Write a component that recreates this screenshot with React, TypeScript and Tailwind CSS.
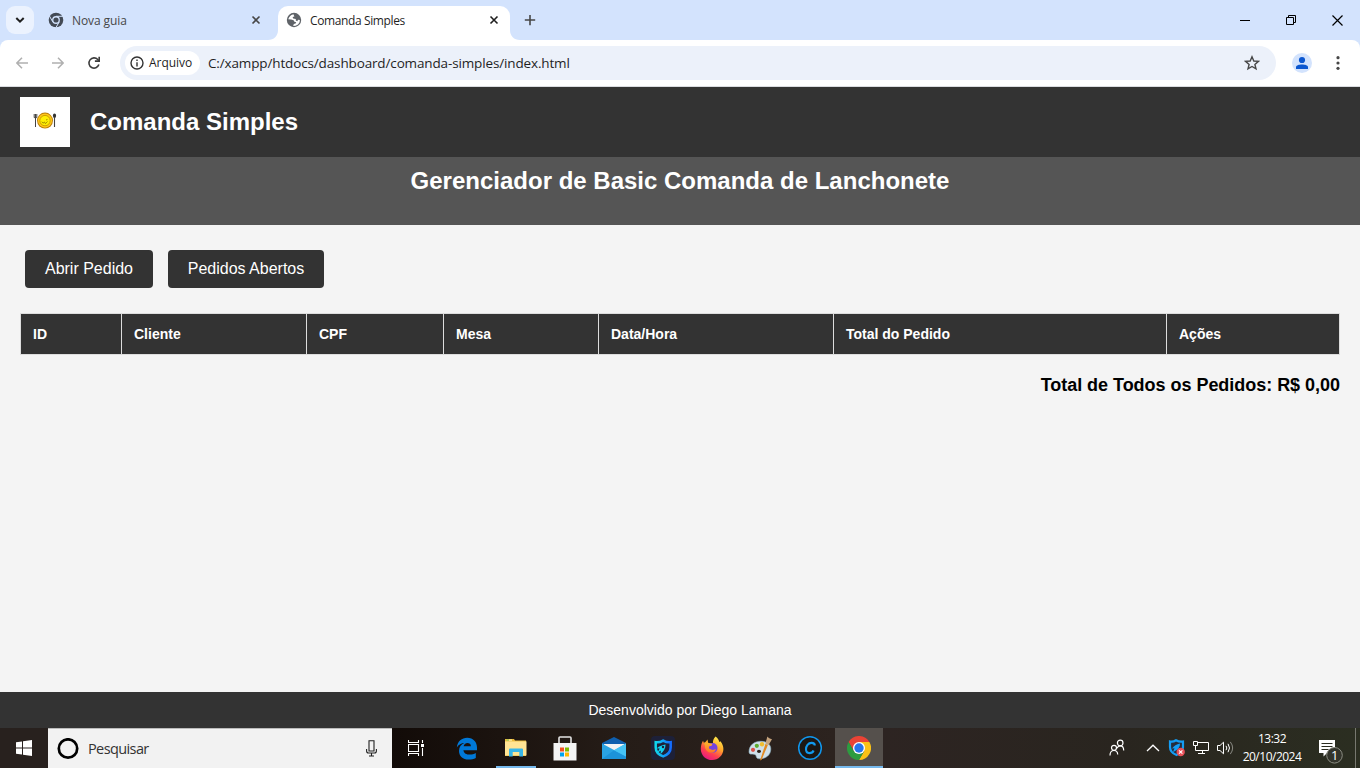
import React from "react";

const ui = "font-['Open_Sans','Noto_Sans',sans-serif]";

function ChromeMono() {
  return (
    <svg width="16" height="16" viewBox="0 0 16 16" className="shrink-0">
      <circle cx="8" cy="8" r="7.3" fill="#434a55" />
      <path d="M8 4.3H15M4.8 9.9L1.3 3.8M11.2 9.9L7.7 16" stroke="#d3e3fd" strokeWidth="1" fill="none" />
      <circle cx="8" cy="8" r="3.9" fill="#d3e3fd" />
      <circle cx="8" cy="8" r="2.6" fill="#434a55" />
    </svg>
  );
}

function Globe() {
  return (
    <svg width="16" height="16" viewBox="0 0 16 16" className="shrink-0">
      <circle cx="8" cy="8" r="7.2" fill="#5f6368" />
      <path d="M7.4 2.2L5 3.2L3.2 5.2L2.2 7.2L5.2 7.4L7.6 8.2L8.4 9.8L10.2 10.2L9.6 11.6L7.8 12L7.2 14L9.6 13.8L12 12.4L13.6 10.2L13.9 8L12 7.8L11.4 9.2L9.8 8.4L9.8 7L7.2 6.4L6.6 5L8.4 4.4Z" fill="#fff" />
    </svg>
  );
}

function Cross({ color = "#333" }: { color?: string }) {
  return (
    <svg width="10" height="10" viewBox="0 0 10 10" className="shrink-0">
      <path d="M1.5 1.5L8.5 8.5M8.5 1.5L1.5 8.5" stroke={color} strokeWidth="1.6" />
    </svg>
  );
}

function TabStrip() {
  return (
    <div className="flex h-10 items-start bg-[#d3e3fd]">
      <div className="ml-1.5 mt-1.5 flex h-7 w-7 items-center justify-center rounded-[9px] bg-[#ebf2fe]">
        <svg width="10" height="8" viewBox="0 0 10 8">
          <path d="M1.3 2L5 5.7L8.7 2" fill="none" stroke="#1f1f1f" strokeWidth="2" />
        </svg>
      </div>
      <div className="ml-3.5 flex h-10 w-[220px] items-center">
        <ChromeMono />
        <span className="ml-2 w-[179px] pt-0.5 text-[12px] leading-4 tracking-[-0.1px] text-[#474747]">Nova guia</span>
        <Cross color="#474747" />
      </div>
      <svg width="10" height="40" viewBox="0 0 10 40" className="shrink-0">
        <path d="M0 40C6 40 10 36 10 30V40Z" fill="#fff" />
      </svg>
      <div className="mt-1.5 flex h-[34px] w-[232px] items-start rounded-t-[10px] bg-white pl-2 pt-1.5">
        <Globe />
        <span className="ml-2 w-[179px] pt-px text-[12px] leading-4 tracking-[-0.38px] text-[#1f1f1f]">Comanda Simples</span>
        <span className="pt-[3px]"><Cross color="#1f1f1f" /></span>
      </div>
      <svg width="10" height="40" viewBox="0 0 10 40" className="shrink-0">
        <path d="M10 40C4 40 0 36 0 30V40Z" fill="#fff" />
      </svg>
      <svg width="12" height="40" viewBox="0 0 12 40" className="ml-1">
        <path d="M6 15V25.2M.8 20H11.2" stroke="#474747" strokeWidth="1.6" />
      </svg>
      <div className="ml-auto flex h-10 items-center pr-[17px]">
        <svg width="10" height="11" viewBox="0 0 10 11"><path d="M0 5.5H10" stroke="#000" strokeWidth="1" /></svg>
        <svg width="11" height="11" viewBox="0 0 11 11" className="ml-9"><path d="M.5 2.5H7.5V9.5H.5ZM2.5 2.5V.5H9.5V7.5H7.5" fill="none" stroke="#000" /></svg>
        <svg width="11" height="11" viewBox="0 0 11 11" className="ml-[35px]"><path d="M.5 .5L10.5 10.5M10.5 .5L.5 10.5" stroke="#000" strokeWidth="1.2" /></svg>
      </div>
    </div>
  );
}

function Toolbar() {
  return (
    <div className="bg-[#d3e3fd]">
      <div className="flex h-[47px] items-start rounded-t-[8px] border-b border-[#dadce0] bg-white pt-1.5">
        <div className="flex h-[34px] w-[120px] items-center pl-4">
          <svg width="12" height="12" viewBox="0 0 12 12"><path d="M12 6H1.2M6 .8L.9 6L6 11.2" fill="none" stroke="#b0b0b0" strokeWidth="1.5" /></svg>
          <svg width="12" height="12" viewBox="0 0 12 12" className="ml-6"><path d="M0 6H10.8M6 .8L11.1 6L6 11.2" fill="none" stroke="#b0b0b0" strokeWidth="1.5" /></svg>
          <svg width="14" height="14" viewBox="0 0 14 14" className="ml-[23px]">
            <path d="M11.9 8.6A5.1 5.1 0 1 1 10.8 3.5L12 4.7" fill="none" stroke="#3c3c3c" strokeWidth="1.6" />
            <path d="M13 .8V5.9H7.9V4.3H11.4V.8Z" fill="#3c3c3c" />
          </svg>
        </div>
        <div className="flex h-[34px] w-[1156px] items-center rounded-full bg-[#ecf1fa] pl-[5px]">
          <div className="flex h-6 w-[75px] items-center rounded-full bg-white pl-[5px]">
            <svg width="14" height="14" viewBox="0 0 14 14" className="shrink-0">
              <circle cx="7" cy="7" r="6" fill="none" stroke="#333" strokeWidth="1.4" />
              <path d="M7 6.2V10.4M7 3.6V5" stroke="#333" strokeWidth="1.4" />
            </svg>
            <span className="ml-[5px] text-[12px] font-medium leading-4 tracking-[-0.05px] text-[#1f1f1f]">Arquivo</span>
          </div>
          <span className="ml-2 text-[13.5px] leading-5 tracking-[-0.14px] text-[#1f1f1f]">C:/xampp/htdocs/dashboard/comanda-simples/index.html</span>
          <svg width="16" height="16" viewBox="0 0 16 16" className="ml-auto mr-4">
            <path d="M8 1.8L9.8 6L14.4 6.4L10.9 9.4L12 13.9L8 11.5L4 13.9L5.1 9.4L1.6 6.4L6.2 6Z" fill="none" stroke="#474747" strokeWidth="1.4" />
          </svg>
        </div>
        <div className="ml-4 flex h-[34px] items-center">
          <svg width="20" height="20" viewBox="0 0 20 20">
            <circle cx="10" cy="10" r="10" fill="#d3e3fd" />
            <circle cx="10" cy="7" r="3.1" fill="#0b57d0" />
            <path d="M4 16V14C4 10.6 16 10.6 16 14V16Z" fill="#0b57d0" />
          </svg>
          <svg width="4" height="16" viewBox="0 0 4 16" className="ml-6" fill="#474747">
            <circle cx="2" cy="2.7" r="1.6" /><circle cx="2" cy="8" r="1.6" /><circle cx="2" cy="13.3" r="1.6" />
          </svg>
        </div>
      </div>
    </div>
  );
}

function Logo() {
  return (
    <div className="flex h-[50px] w-[50px] items-center justify-center bg-white pb-0.5">
      <svg width="24" height="18" viewBox="0 0 24 18">
        <circle cx="12" cy="8.6" r="8" fill="#b97c08" />
        <circle cx="12" cy="8.6" r="7.1" fill="#ffc61a" />
        <circle cx="12" cy="8.6" r="5.2" fill="#ffee05" stroke="#c79a00" strokeWidth=".9" />
        <path d="M8.8 9.7L10 11.2L11.5 10L12.4 11.7L14.6 9.5M13 8L14.5 7.4" fill="none" stroke="#8e7c00" strokeWidth=".8" />
        <path d="M1.2 2V5.6H3.8V2M2.5 2V15" fill="none" stroke="#444" strokeWidth="1" />
        <ellipse cx="21.5" cy="3.8" rx="1.6" ry="2.2" fill="#333" />
        <path d="M21.5 5V15" stroke="#444" strokeWidth="1.1" />
      </svg>
    </div>
  );
}

const columns = ["ID", "Cliente", "CPF", "Mesa", "Data/Hora", "Total do Pedido", "Ações"];

function Page() {
  return (
    <div className="flex h-[641px] flex-col bg-[#f4f4f4] font-['Liberation_Sans',Arial,sans-serif]">
      <header className="flex h-[70px] items-center bg-[#333] px-5">
        <Logo />
        <h1 className="ml-5 text-2xl font-bold leading-7 text-white">Comanda Simples</h1>
      </header>
      <div className="h-[68px] bg-[#555] pt-2.5 text-center">
        <h2 className="text-2xl font-bold leading-7 text-white">Gerenciador de Basic Comanda de Lanchonete</h2>
      </div>
      <main className="flex-1 px-5 pt-[25px]">
        <div className="flex gap-[15px] pl-[5px]">
          <button className="h-[38px] w-32 rounded-[4px] bg-[#333] text-base leading-[18px] text-white">Abrir Pedido</button>
          <button className="h-[38px] w-[156px] rounded-[4px] bg-[#333] text-base leading-[18px] text-white">Pedidos Abertos</button>
        </div>
        <div className="mt-[25px] grid h-[42px] grid-cols-[101px_185px_137px_155px_235px_333px_174px] border-y border-r border-[#ddd] bg-[#333]">
          {columns.map((c) => (
            <div key={c} className="flex items-center border-l border-[#ddd] pl-3 text-sm font-bold text-white">{c}</div>
          ))}
        </div>
        <p className="mt-5 text-right text-lg font-bold leading-5 tracking-[-0.03px] text-black">Total de Todos os Pedidos: R$ 0,00</p>
      </main>
      <footer className="h-9 bg-[#333] pl-5 pt-2.5 text-center text-sm leading-4 text-white">Desenvolvido por Diego Lamana</footer>
    </div>
  );
}

function TaskView() {
  return (
    <svg width="18" height="16" viewBox="0 0 18 16" fill="none" stroke="#fff">
      <path d="M.5 0V2.5H10.5V0M.5 16V13.5H10.5V16M.5 4.5H10.5V11.5H.5ZM14.5 0V3M14.5 8V16" strokeWidth="1.1" />
      <path d="M13 4H16V7H13Z" fill="#fff" stroke="none" />
    </svg>
  );
}

function Edge() {
  return (
    <svg width="22" height="23" viewBox="0 0 22 23">
      <path d="M.8 10.4C1.6 4.2 5.8 .8 11.2 .8C17.4 .8 21 5.2 21 10.6V13.2H7.4C7.8 16.4 10.6 17.6 13.8 17.6C16 17.6 18 17 19.8 16V20.9C17.8 22 15.4 22.6 12.6 22.6C7 22.6 3 18.8 3 13.9C3 10.3 5 7.4 8.4 6.1C5.3 6.2 2.6 7.6 .8 10.4ZM7.6 9.2H14.9C14.9 6.9 13.4 5.9 11.4 5.9C9.4 5.9 8 7.2 7.6 9.2Z" fill="#0078d7" />
    </svg>
  );
}

function Folder() {
  return (
    <svg width="22" height="20" viewBox="0 0 22 20">
      <path d="M0 1H9L10 2.4H21V18H0Z" fill="#eab837" />
      <path d="M1.5 1.5H4V2.7H1.5Z" fill="#8fd16a" />
      <path d="M4 1.5H7V2.7H4Z" fill="#fff3b0" />
      <path d="M0 3.4H21.5V17.5H0Z" fill="#ffe494" />
      <path d="M4 11.5Q4 10.5 5 10.5H17Q18 10.5 18 11.5V18.6H14.3V14H7.7V18.6H4Z" fill="#38b6e8" />
    </svg>
  );
}

function Store() {
  return (
    <svg width="24" height="25" viewBox="0 0 24 25">
      <path d="M6 9V2Q6 1 7 1H17Q18 1 18 2V9" fill="none" stroke="#e4e4e4" strokeWidth="1.6" />
      <path d="M.5 7H23.5V24.5H.5Z" fill="#f4f4f4" />
      <path d="M7 11.5H11V15.5H7Z" fill="#f25022" />
      <path d="M12 11.5H16V15.5H12Z" fill="#7fba00" />
      <path d="M7 16.5H11V20.5H7Z" fill="#00a4ef" />
      <path d="M12 16.5H16V20.5H12Z" fill="#ffb900" />
    </svg>
  );
}

function Mail() {
  return (
    <svg width="24" height="24" viewBox="0 0 24 24">
      <path d="M0 7L12 1L24 7V11H0Z" fill="#0f5fae" />
      <path d="M2 8H22V17H2Z" fill="#f3f3f3" />
      <path d="M24 7.5L12 14.2L0 23H24Z" fill="#35b8f1" />
      <path d="M0 7.5L24 20.6V23H0Z" fill="#29a3e4" />
      <path d="M12 14.2L24 20.6V23H0Z" fill="#1c93da" />
      <path d="M24 7.5L12 14.2L24 20.6Z" fill="#45c3f5" />
    </svg>
  );
}

function Shield() {
  return (
    <svg width="24" height="24" viewBox="0 0 24 24">
      <defs>
        <linearGradient id="shieldBlue"><stop stopColor="#10d8ed" /><stop offset="1" stopColor="#136cff" /></linearGradient>
      </defs>
      <rect width="24" height="24" rx="4" fill="#1d2038" />
      <path d="M4.7 6.2Q8.4 6.8 12.2 4.6Q16 6.8 19.7 6.2V11.2C19.7 15.8 16.6 18.8 12.2 20.4C7.8 18.8 4.7 15.8 4.7 11.2Z" fill="none" stroke="url(#shieldBlue)" strokeWidth="2.5" />
      <path d="M14.5 8.5C11.5 8.8 8.5 10 5.8 12.2L8.7 12.6L6.2 17L9.8 14.4L9.6 18C12.6 15.8 14.7 12.2 14.5 8.5Z" fill="#12cfee" />
      <circle cx="12" cy="11" r="1.2" fill="#1d2038" />
    </svg>
  );
}

function Firefox() {
  return (
    <svg width="24" height="25" viewBox="0 0 24 25">
      <defs>
        <linearGradient id="ffBody" x1=".8" y1="0" x2=".25" y2="1"><stop stopColor="#fff44f" /><stop offset=".4" stopColor="#ffa62a" /><stop offset=".7" stopColor="#ff4050" /><stop offset="1" stopColor="#e31587" /></linearGradient>
        <linearGradient id="ffArm" x2="0" y2="1"><stop stopColor="#ffb52e" /><stop offset="1" stopColor="#ff7128" /></linearGradient>
      </defs>
      <path d="M15.6 .5C18.3 2.6 19 4.6 19.2 6L20.4 5.2C22.3 7.5 23.4 10.4 23.4 13C23.4 19.2 18.3 24 12.2 24C5.7 24 .8 19.1 .8 12.9C.8 9.9 1.6 7.1 3 4.8L4.2 7.4L7.5 3.5L8.2 7L13 7.4C12.6 5.1 13.6 2.4 15.6 .5Z" fill="url(#ffBody)" />
      <circle cx="12.6" cy="12" r="4.9" fill="#7544de" />
      <path d="M4 6.6L7.8 6.4L9.5 7.6L12.5 7.7L11.6 9.8L8.9 10.6L9.2 12.8L12.5 14.1L16 13.2C15 16.2 12.3 17.4 9.8 16.6C6.6 15.6 4.6 12.5 5 9.7Z" fill="url(#ffArm)" />
    </svg>
  );
}

function Paint() {
  return (
    <svg width="25" height="25" viewBox="0 0 25 25">
      <path d="M1 15.8C1 9.2 6.4 5.3 12.6 5.3C18.8 5.3 22.8 8.4 22.8 13C22.8 19 17.8 23 11.2 22.8C7.6 22.7 8.8 20 7.3 18.8C5.4 17.4 1 19.7 1 15.8Z" fill="#cfe0ea" stroke="#8caebf" strokeWidth=".6" />
      <ellipse cx="11" cy="15.3" rx="2" ry="1.6" fill="#2b211b" />
      <circle cx="5" cy="13.8" r="2.1" fill="#d95248" />
      <circle cx="8.8" cy="9.8" r="2.1" fill="#5dad2f" />
      <circle cx="14" cy="8.3" r="2.2" fill="#f0bd30" />
      <path d="M12 24.5L17.4 8L20 8.8L13.6 23.8Z" fill="#e28a22" />
      <path d="M17.4 7.6L20.6 9L24 3.2C21.8 3 20.6 2 19.4 .6Z" fill="#c5a37d" />
    </svg>
  );
}

function CCircle() {
  return (
    <svg width="26" height="26" viewBox="0 0 26 26">
      <circle cx="13" cy="13" r="11.3" fill="#1b1714" stroke="#1196ec" strokeWidth="1.5" />
      <path d="M17.8 10.5C17.8 8.7 16.5 7.9 14.6 7.9C11.1 7.9 9 11 9 14.3C9 16.8 10.2 18.1 12.3 18.1C14.4 18.1 15.9 17.3 16.6 15.5" fill="none" stroke="#1199ee" strokeWidth="2.1" />
    </svg>
  );
}

function Chrome() {
  return (
    <svg width="24" height="24" viewBox="0 0 24 24">
      <path d="M1.6 6A12 12 0 0 1 22.4 6H12L6.8 15Z" fill="#ea4335" />
      <path d="M12 6H22.4A12 12 0 0 1 12 24L17.2 15Z" fill="#fbc116" />
      <path d="M1.6 6L6.8 15L12 18L17.2 15L12 24A12 12 0 0 1 1.6 6Z" fill="#2d9b40" />
      <circle cx="12" cy="12" r="6" fill="#fff" />
      <circle cx="12" cy="12" r="4.7" fill="#2874ec" />
    </svg>
  );
}

const pinned = [
  { key: "edge", icon: <Edge /> },
  { key: "folder", icon: <Folder /> },
  { key: "store", icon: <Store /> },
  { key: "mail", icon: <Mail /> },
  { key: "shield", icon: <Shield /> },
  { key: "firefox", icon: <Firefox /> },
  { key: "paint", icon: <Paint /> },
  { key: "c", icon: <CCircle /> },
];

function Taskbar() {
  return (
    <div className="flex h-10 bg-[#28211e]">
      <div className="flex w-12 items-center justify-center bg-[#28211e]">
        <svg width="16" height="16" viewBox="0 0 16 16" fill="#fff"><path d="M0 2.3L6 1.4V7.5H0ZM7 1.3L16 0V7.5H7ZM0 8.5H6V14.6L0 13.7ZM7 8.5H16V16L7 14.7Z" /></svg>
      </div>
      <div className="flex w-[344px] items-center border-t border-[#bcbcbc] bg-[#f2f2f2] pl-[9px] pr-3.5">
        <svg width="22" height="22" viewBox="0 0 22 22"><circle cx="11" cy="10.5" r="9.2" fill="none" stroke="#000" strokeWidth="2.7" /></svg>
        <span className="ml-[9px] text-[14.5px] leading-5 tracking-[-0.6px] text-[#333]">Pesquisar</span>
        <svg width="12" height="18" viewBox="0 0 12 18" className="ml-auto" fill="none" stroke="#222" strokeWidth="1.1">
          <path d="M3 .8H8V11H3ZM.6 9V11Q.6 13 2.6 13H8.4Q10.4 13 10.4 11V9M5.5 13V16M3 16H8" />
        </svg>
      </div>
      <div className="flex w-[443px] bg-linear-to-r from-[#120b08] via-[#251c17] to-[#2c231f]">
        <div className="flex w-[50px] items-center justify-center"><TaskView /></div>
        {pinned.map((p) => (
          <div key={p.key} className="flex w-[49px] flex-col items-center">
            <div className="flex h-[38px] items-center pt-0.5">{p.icon}</div>
            {p.key === "folder" && <div className="h-0.5 w-10 bg-[#76b9ed]" />}
          </div>
        ))}
      </div>
      <div className="flex h-10 w-12 flex-col items-center border-b-2 border-[#76b9ed] bg-[#55504c] pt-2"><Chrome /></div>
      <div className="flex flex-1 bg-linear-to-r from-[#2d2422] via-[#29251f] to-[#2b2e21]">
        <div className="ml-auto flex items-center">
          <svg width="16" height="18" viewBox="0 0 16 18" fill="none" stroke="#fff" strokeWidth="1.2">
            <circle cx="5" cy="8.8" r="2.5" /><path d="M1 16.5C1 12.9 2.3 11.5 5 11.5S8.6 12.8 8.7 15.5" />
            <circle cx="11.2" cy="4" r="2.8" /><path d="M8 9.2C8.7 7.5 9.7 6.9 11.2 6.9C13.7 6.9 14.7 8.5 14.7 11.5" />
          </svg>
          <svg width="14" height="8" viewBox="0 0 14 8" className="ml-[21px]"><path d="M1 7L7 1.2L13 7" fill="none" stroke="#fff" strokeWidth="1.3" /></svg>
          <svg width="18" height="18" viewBox="0 0 18 18" className="ml-2">
            <path d="M2 2.5Q5 3.2 8 1.3Q11.5 3.2 15 2.5V8C15 12 12.4 14.5 8.5 16C4.5 14.5 2 12 2 8Z" fill="#252d3c" stroke="#149df5" strokeWidth="2.2" />
            <path d="M12 4.5C8.5 5 6 7 4 9.5L6.5 9.3L5 13C10 10.8 12 8.5 12 4.5Z" fill="#149df5" />
            <circle cx="12.7" cy="13" r="4.2" fill="#e85058" /><path d="M11 11.3L14.4 14.7M14.4 11.3L11 14.7" stroke="#fff" strokeWidth="1.1" />
          </svg>
          <svg width="17" height="14" viewBox="0 0 17 14" className="ml-[7px]" fill="none" stroke="#fff">
            <path d="M4.5 1.5H15.5V9.5H2.5V4.5M.5 .5H4.5V4.5H.5ZM9.5 9.5V12.5M5 12.5H12" />
          </svg>
          <svg width="17" height="14" viewBox="0 0 17 14" className="ml-[7px]" fill="none" stroke="#fff">
            <path d="M.5 4.5H3L6.5 1.2V12.8L3 9.5H.5Z" /><path d="M9 4.8Q10.7 7 9 9.2M11 2.8Q14 7 11 11.2" /><path d="M13.3 .9Q18 7 13.3 13.1" stroke="#8b8b84" />
          </svg>
          <div className="ml-2 w-[60px] text-center text-[12px] leading-[18px] tracking-[-0.5px] text-white">
            <div>13:32</div><div>20/10/2024</div>
          </div>
          <div className="relative ml-[17px] h-10 w-6">
            <svg width="26" height="40" viewBox="0 0 26 40" className="absolute left-0 top-0">
              <path d="M0 12H16V25H8L4.5 28.5V25H0Z" fill="#fff" />
              <path d="M2.5 15.5H13.5M2.5 18.5H13.5M2.5 21.5H9.5" stroke="#2b2c21" strokeWidth="1" />
              <circle cx="15.5" cy="27.3" r="7.8" fill="#33342b" stroke="#8b8c82" strokeWidth="1" />
            </svg>
            <span className="absolute left-[12px] top-[19px] text-[13px] leading-4 text-white">1</span>
          </div>
          <div className="ml-3 h-10 w-[5px] border-l border-[#77786f]" />
        </div>
      </div>
    </div>
  );
}

export default function App() {
  return (
    <div className={`flex h-[768px] w-[1360px] flex-col overflow-hidden ${ui}`}>
      <TabStrip />
      <Toolbar />
      <Page />
      <Taskbar />
    </div>
  );
}
